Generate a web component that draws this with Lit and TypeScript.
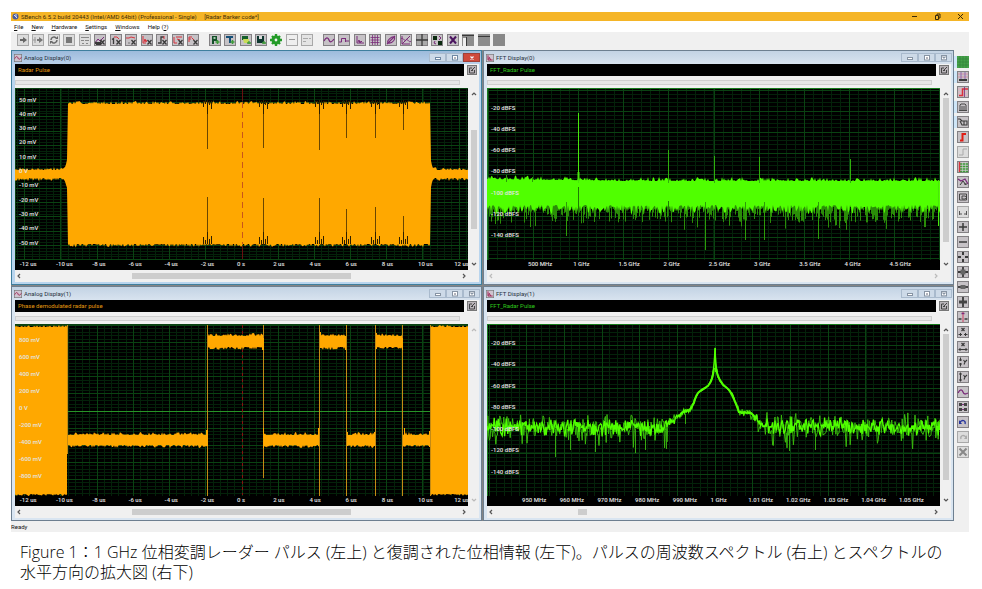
import { LitElement, html, svg, css, TemplateResult, SVGTemplateResult } from "lit";
import { customElement, property } from "lit/decorators.js";
import { classMap } from "lit/directives/class-map.js";

type Glyph = SVGTemplateResult;
interface Tool { name: string; glyph: Glyph; plain?: boolean; faded?: boolean; lit?: boolean }
interface Mark { at: number; text: string }
interface Plot {
  xLines: { zero: number; step: number; parts: number };
  yLines: { zero: number; step: number; parts: number };
  xMarks: Mark[];
  yMarks: Mark[];
  trace: Glyph;
}

const W = 453;
const H = 182;
const GRID_H = 172;

/* repeatable noise, so that the traces are the same on every load */
function noise(seed: number) {
  let s = seed;
  return () => {
    s = (s * 1664525 + 1013904223) >>> 0;
    return s / 4294967296;
  };
}

function path(points: number[][]): string {
  return "M" + points.map(([x, y]) => `${x.toFixed(1)} ${y.toFixed(1)}`).join("L");
}

/* filled band between two ragged edges */
function band(seed: number, x0: number, x1: number, top: (x: number) => number, bottom: (x: number) => number, rough: number): string {
  const rnd = noise(seed);
  const up: number[][] = [];
  const down: number[][] = [];
  for (let x = x0; x <= x1; x += 1) {
    up.push([x, top(x) - Math.pow(rnd(), 2) * rough]);
    down.unshift([x, bottom(x) + Math.pow(rnd(), 2) * rough]);
  }
  return path(up.concat(down)) + "Z";
}

function pulseTrace(): Glyph {
  const edge = (x: number) => {
    if (x < 45 || x > 421) return 4;
    if (x < 53) return 4 + Math.pow((x - 45) / 8, 3) * 12;
    if (x > 415) return 4 + Math.pow((421 - x) / 6, 3) * 14;
    return 70;
  };
  const notches: number[][] = [
    [192, 61, 109], [248, 60, 110], [304, 62, 110], [331, 50, 121], [360, 50, 119], [388, 42, 128],
  ];
  return svg`
    <path fill="#ffa800" d=${band(7, 0, W, (x) => 86 - edge(x), (x) => 86 + edge(x), 3)} />
    ${notches.map(([x, a, b]) => svg`
      <path stroke="#6a4600" stroke-width="1" d=${`M${x + 0.5} 12V${a}M${x + 0.5} ${b}V156`} />
      <path stroke="#2c1e00" stroke-width="1" fill="none"
        d=${`M${x - 3.5} 13v6M${x - 1.5} 13v3M${x + 0.5} 12v14M${x + 2.5} 13v4M${x + 4.5} 13v8M${x - 3.5} 156v-7M${x - 1.5} 156v-4M${x + 0.5} 156v-12M${x + 2.5} 156v-5M${x + 4.5} 156v-8`} />`)}
    <path stroke="#c8541c" stroke-width="1" stroke-dasharray="6 4" d="M227.5 14V156" />
    <path stroke="#6a1010" stroke-width="1" d="M227.5 0V13M227.5 158V171" />`;
}

function phaseTrace(): Glyph {
  const steps: number[][] = [
    [53, 192, 0], [192, 248, 1], [248, 304, 0], [304, 331, 1], [331, 360, 0], [360, 388, 1], [388, 415, 0],
  ];
  return svg`
    <rect x="52" y="87" width="363" height="1" fill="#279427" />
    <path stroke="#8a1010" stroke-dasharray="3 3" d="M227.5 1V171" />
    <path fill="#ffa800" d=${band(3, 0, 52, () => 3, () => 170, 2)} />
    <path fill="#ffa800" d=${band(5, 415, W, () => 3, () => 170, 2)} />
    ${steps.map(([a, b, high], i) => svg`
      <path fill="#ffa800" d=${band(21 + i, a, b, () => (high ? 12 : 111), () => (high ? 23 : 121), 3)} />`)}
    <path stroke="#c48a14" d="M52.5 1V130M192.5 1V172M248.5 1V154M304.5 1V172M331.5 1V172M360.5 1V172M387.5 1V172M415.5 1V172" />
    <path fill="#ffa800" d="M191 106h2v16h-2zM247 14h2v12h-2zM248 104h1v20h-1zM303 104h1v18h-1zM305 8h1v16h-1zM330 12h1v14h-1zM332 108h1v14h-1zM359 108h1v14h-1zM361 9h1v16h-1zM387 14h1v12h-1zM389 104h1v18h-1zM414 107h1v16h-1z" />`;
}

function spectrumTrace(): Glyph {
  const rnd = noise(99);
  const top: number[][] = [];
  const bottom: number[][] = [];
  const deep: string[] = [];
  for (let x = 0; x <= W; x += 1) {
    top.push([x, 93 - Math.max(0, 1 - x / 140) * 2 - Math.pow(rnd(), 3) * 4]);
    bottom.unshift([x, 117 + Math.pow(rnd(), 1.5) * 9]);
    deep.push(`M${x + 0.5} 116V${(119 + Math.pow(rnd(), 1.6) * 16).toFixed(1)}`);
    if (rnd() > 0.96) deep.push(`M${x + 0.5} 116V${(132 + rnd() * 10).toFixed(1)}`);
  }
  return svg`
    <path stroke="#2a8c08" d=${deep.join("")} />
    <path fill="#50ff00" d=${path(top.concat(bottom)) + "Z"} />
    <path stroke="#2c9c08" d="M79.5 114V148M218.5 114V162M258.5 114V152M277.5 114V152M331.5 114V151M19.5 87V94M45.5 89V94" />
    <path stroke="#49e60a" d="M91.5 25V95M451.5 92V138" />
    <path stroke="#49e60a" stroke-width="2" d="M91.5 84V93" />
    <path stroke="#2fae0c" d="M181.5 62V95M227.5 68V95M272.5 69V95M363.5 71V95" />
    <path stroke="#1c7a05" d="M91.5 99V128M181.5 113V128" />`;
}

function zoomTrace(): Glyph {
  const shape: number[][] = [
    [0, 103], [176, 103], [185, 97], [192, 92], [196, 88], [203, 86], [207, 78], [211, 69], [215, 66], [221, 62],
    [225, 54], [227, 42], [228, 24], [229, 42], [231, 53], [236, 61], [241, 65], [245, 69], [249, 79], [252, 88],
    [263, 89], [268, 93], [277, 102], [W, 103],
  ];
  const at = (x: number) => {
    let i = 1;
    while (i < shape.length - 1 && shape[i][0] < x) i++;
    const [ax, ay] = shape[i - 1];
    const [bx, by] = shape[i];
    return ay + ((by - ay) * (x - ax)) / (bx - ax);
  };
  const rnd = noise(41);
  const strong: number[][] = [];
  const soft: number[][] = [];
  for (let x = 0; x <= W; x += 0.8) {
    const d = Math.abs(x - 228);
    const rough = d < 20 ? 0.6 : d < 40 ? 3 : d < 52 ? 6 : 11;
    const fall = rnd() > 0.85 && d > 24 ? 16 * rnd() : 0;
    soft.push([x, at(x) + (rnd() + rnd() - 1) * rough * 1.3 + fall]);
    strong.push([x, at(x) + (rnd() + rnd() - 1) * rough * 0.9]);
  }
  return svg`
    <path stroke="#38b80c" fill="none" stroke-width="1" d=${path(soft)} />
    <path stroke="#35a80f" d="M68.5 105V133M83.5 105V126M108.5 105V128M148.5 105V129M158.5 105V126M179.5 105V125M198.5 90V100M302.5 105V127M328.5 105V126" />
    <path stroke="#50ff00" fill="none" stroke-width="1.3" d=${path(strong)} />
    <path stroke="#50ff00" fill="none" stroke-width="2" d="M192 92L196 88L203 86L207 79C209 68 214 66 218 64S226 56 227 44M229 44C231 58 237 62 240 64S246 72 252 88L264 89L270 95" />
    <path stroke="#50ff00" d="M228.5 24V48" />`;
}

const volts = (max: number, step: number, unit: string, zero: number, pitch: number): Mark[] => {
  const out: Mark[] = [];
  for (let v = max; v >= -max; v -= step) out.push({ at: zero - (v / step) * pitch, text: v ? `${v} ${unit}` : "0 V" });
  return out;
};
const times: Mark[] = [-12, -10, -8, -6, -4, -2, 0, 2, 4, 6, 8, 10, 12].map((t) => ({
  at: 227 + t * 18.1, text: t ? `${t} us` : "0 s",
}));
const levels = (zero: number, pitch: number): Mark[] =>
  [1, 2, 3, 4, 5, 6, 7].map((n) => ({ at: zero + n * pitch, text: `-${n * 20} dBFS` }));

const plots: Record<string, Plot> = {
  pulse: {
    xLines: { zero: 227, step: 36.2, parts: 5 }, yLines: { zero: 86, step: 14.3, parts: 5 },
    xMarks: times, yMarks: volts(50, 10, "mV", 86, 14.3), trace: pulseTrace(),
  },
  phase: {
    xLines: { zero: 227, step: 36.2, parts: 5 }, yLines: { zero: 87, step: 17.1, parts: 5 },
    xMarks: times, yMarks: volts(800, 200, "mV", 87, 17.1), trace: phaseTrace(),
  },
  spectrum: {
    xLines: { zero: 1, step: 45.2, parts: 5 }, yLines: { zero: 2, step: 21.1, parts: 5 },
    xMarks: ["500 MHz", "1 GHz", "1.5 GHz", "2 GHz", "2.5 GHz", "3 GHz", "3.5 GHz", "4 GHz", "4.5 GHz"]
      .map((text, i) => ({ at: 46 + i * 45.2, text })),
    yMarks: levels(2, 21.1), trace: spectrumTrace(),
  },
  zoomed: {
    xLines: { zero: 2, step: 37.7, parts: 5 }, yLines: { zero: 0, step: 21.5, parts: 5 },
    xMarks: ["950 MHz", "960 MHz", "970 MHz", "980 MHz", "990 MHz", "1 GHz", "1.01 GHz", "1.02 GHz", "1.03 GHz", "1.04 GHz", "1.05 GHz"]
      .map((text, i) => ({ at: 40 + i * 37.7, text })),
    yMarks: levels(0, 21.5), trace: zoomTrace(),
  },
};

function gridPath(p: Plot, major: boolean): string {
  let d = "";
  const add = (zero: number, step: number, parts: number, end: number, vertical: boolean) => {
    const s = major ? step : step / parts;
    for (let v = ((zero % s) + s) % s; v < end; v += s) {
      const c = Math.floor(v) + 0.5;
      d += vertical ? `M${c} 0V${GRID_H}` : `M0 ${c}H${W}`;
    }
  };
  add(p.xLines.zero, p.xLines.step, p.xLines.parts, W, true);
  add(p.yLines.zero, p.yLines.step, p.yLines.parts, GRID_H, false);
  return d;
}

/* glyphs, all on a 12 by 12 board */
const K = "#3a3a3a";
const P = "#7a2c7a";
const R = "#d8323c";
const G = "#3f9b3a";
const s = (d: string, c = K, w = 1): Glyph => svg`<path d=${d} fill="none" stroke=${c} stroke-width=${w} />`;
const f = (d: string, c = K): Glyph => svg`<path d=${d} fill=${c} />`;
const j = (...g: Glyph[]): Glyph => svg`${g}`;
const cross = s("M6.5 6l4 4.5M10.5 6l-4 4.5", K, 1.3);

const acquire: Tool[] = [
  { name: "Start", faded: true, glyph: f("M3 5h3V3l4 3-4 3V7H3z", "#666") },
  { name: "Start single", faded: true, glyph: j(f("M5 5h2V3l4 3-4 3V7H5z", "#777"), s("M1 6h3M3 3v6", "#999")) },
  { name: "Loop", faded: true, glyph: j(s("M3 6c0-3 4-4 5-2M9 6c0 3-4 4-5 2", "#666", 1.5), f("M7 5h3V2zM5 7H2v3z", "#666")) },
  { name: "Stop", faded: true, glyph: f("M3 3h6v6H3z", "#777") },
  { name: "Trigger force", faded: true, glyph: s("M2 3.5h8M2 6.5h3M6 6.5h4M3 9.5h2M7 9.5h2", "#888") },
  { name: "Remove analog", glyph: j(s("M1 9l3-4 2 2 4-4", P), f("M1 7l2 3H1zM2 8h4l1-3v6H2z"), cross) },
  { name: "Remove single", glyph: j(s("M3.5 10V4.500L2 5.500", K, 1.3), s("M4 3h3l2 2", R), cross) },
  { name: "Remove trace", glyph: j(s("M1 4h3l2-1 4 1", R), s("M3 9h2", "#777"), cross) },
  { name: "Remove FFT", glyph: j(s("M2 2v7h3M3 8l1-3 1 3 1-2", R), cross) },
  { name: "Remove histogram", glyph: j(s("M2 9h3V3h3", K, 1.3), s("M8 2v3", R), cross) },
  { name: "Remove measure", glyph: j(s("M2 3v6h3M4 3h6M5 5l3 1", R), cross) },
  { name: "Remove filter", glyph: j(s("M2 3h3M2 5h2M2 3v5M5 4l2 2", R), cross) },
];
const files: Tool[] = [
  { name: "New project", glyph: j(f("M3 2h5v5H5v3H3z", "#14502a"), f("M4.500 3h2v2h-2z", "#a8c8b0"), s("M8.500 6v4M6.500 8h4", G, 1.5)) },
  { name: "New text", glyph: j(f("M2 2h7v2H7v5H5V4H2z", "#175078"), s("M8.500 6v4M6.500 8h4", G, 1.5)) },
  { name: "Import", glyph: j(f("M2 2h6v4H2z", "#15602a"), f("M3 5h6v4H4z", "#c9dc58"), s("M9 7v3M7 9h4", G, 1.3)) },
  { name: "Save", glyph: j(f("M2 2h7v7H2z", "#0f3830"), f("M4 2h3v3H4z", "#ddd"), s("M9 7v3M7 9h4", G, 1.3)) },
  { name: "Settings", plain: true, glyph: j(s("M6 0v12M0 6h12M2 2l8 8M10 2l-8 8", "#239b28", 2.4), svg`<circle cx="6" cy="6" r="3.2" fill="none" stroke="#239b28" stroke-width="2.6" /><circle cx="6" cy="6" r="1.4" fill="#f0f0f0" />`) },
  { name: "Comment", faded: true, glyph: j(f("M1 1h10v10H1z", "#eee"), s("M3 5.5h6", "#999")) },
  { name: "Report", faded: true, glyph: j(f("M1 1h10v10H1z", "#e4e4e4"), s("M2 4.5h5M8 4.5h2M2 7.5h3", "#aaa")) },
];
const displays: Tool[] = [
  { name: "Analog display", glyph: s("M1 7c2-4 4-4 5-1s3 2 5-1", P, 1.3) },
  { name: "Digital display", glyph: s("M1 8h2.500V4.500h4V7H11M3.500 5v3M7.500 4v4", P) },
  { name: "FFT display", glyph: s("M3 2v7h7M4 8l1-2 1 3 1-2 1 1", P) },
  { name: "Spreadsheet", glyph: s("M1.5 3.5h9M1.5 6h9M1.5 8.5h9M3.5 1v10M6 1v10M8.5 1v10", P, 0.8) },
  { name: "XY display", glyph: s("M3 9c-2-2 4-7 6-6s-1 7-6 6zM2 10l8-8", P, 1.1) },
  { name: "Histogram", glyph: s("M1 5c2-3 4 4 5 1s3 4 5 1M2 10l8-8M2 2v8h8", P) },
  { name: "Tile", glyph: j(f("M1 1h10v10H1z", "#aaa"), s("M6 0v12M0 6h12", K, 1.3)) },
  { name: "Swap", glyph: j(f("M2 2h4v4H2zM7 7h4v4H7z", "#0b2a10"), s("M8 2l2 2-2 2M4 7l-1 2 2 1", P)) },
  { name: "Close all", glyph: s("M3 2.5l6 7M9 2.5l-6 7", "#4b1560", 2) },
  { name: "Side panel", glyph: j(f("M0 0h12v12H0z", "#8c8c8c"), f("M1 4h3v8H1z", "#eee"), s("M0 1.5h12M4.5 3v9", K)) },
  { name: "Top panel", glyph: j(f("M0 0h12v12H0z", "#8c8c8c"), s("M0 2.5h12", K)) },
  { name: "Full panel", glyph: f("M0 0h12v12H0z", "#888") },
];
const arrows = "M6 1v3M6 8v3M1 6h3M8 6h3";
const side: Tool[] = [
  { name: "Grid", lit: true, glyph: j(f("M0 0h12v12H0z", "#45a049"), s("M3 0v12M6 0v12M9 0v12M0 3h12M0 6h12M0 9h12", "#2f8036", 0.6)) },
  { name: "Scale", lit: true, glyph: j(s("M1 3h10M1 6h10", "#d890a8"), s("M4 1v7M8 1v7", "#8a6ab0"), f("M2 8h8v2H2z")) },
  { name: "Curve", glyph: j(s("M1 3h10M1 6h10M1 9h10", "#eab0c0"), s("M2 9.500h3.500V3H11", R, 1.5), s("M7.500 1v10", P, 0.8)) },
  { name: "Lock", lit: true, glyph: s("M3 9V4l1-1h4l1 1v5M2 9.5h8M5 5v4M7 5v4", K, 0.9) },
  { name: "Label", lit: true, glyph: s("M1 3h2l2 2M4 5h6v4H5L3 5M7 5v4", K, 1.1) },
  { name: "Rising", glyph: s("M3 9.5h2.5V3H9", "#e01c14", 2) },
  { name: "Falling", faded: true, glyph: s("M2 9h4V3h4", "#aaa") },
  { name: "Levels", glyph: j(s("M2 3h9M2 5.5h9M2 8h9M2 10.5h9", G, 1.4), s("M2.5 1v10", R, 1.4), s("M5.5 1v10M8.5 1v10", "#ddd", 0.5)) },
  { name: "Signals", glyph: j(s("M1 3l3 2 4-2 3 5", P, 1.3), s("M3 9l3-4 3 4M7 8h3", K)) },
  { name: "Copy", glyph: s("M2.5 3h7v6h-7zM5 5h3l2 1.5L8 8H5z", K, 0.9) },
  { name: "Width", faded: true, glyph: s("M2.5 5v4M9.5 5v4M3 8h2M7 8h2", "#555") },
  { name: "Zoom in", glyph: s("M6 2v8M2 6h8", K, 1.5) },
  { name: "Zoom out", glyph: s("M2 6h8", K, 1.5) },
  { name: "Move", glyph: s(arrows, K, 2) },
  { name: "Fit", glyph: j(s(arrows, K, 1.8), f("M3.5 3.5h5v5h-5z", "#666")) },
  { name: "Fit width", glyph: j(s("M1 6h10", K, 1.8), f("M3.5 4h5v4h-5z", "#666")) },
  { name: "Fit height", glyph: j(s("M6 1v10", K, 1.8), f("M2 4.5h8v3H2z", "#444")) },
  { name: "Cursor", glyph: j(s("M6 1v10", "#d05070", 1.2), s("M4.500 2.5h3", P, 1.4), s("M1.5 8h3M7.5 8h3", K, 1.6)) },
  { name: "Shrink X", glyph: j(s("M4.5 2l3 3M7.5 2l-3 3", K, 1.2), s("M1.5 8.5h3.5M7 8.5h3.5M3.5 7v3M8.5 7v3", K)) },
  { name: "Stretch X", glyph: j(s("M4.5 2l3 3M7.5 2l-3 3", K, 1.2), s("M1.5 8.5h9M3 7v3M9 7v3", K)) },
  { name: "Shrink Y", glyph: j(s("M3.5 1.5v3.5M3.5 7v3.5M2 4h3M2 8h3", K), s("M6.5 4l1.5 2 2-2M8 6l-1 2.5", K, 1.1)) },
  { name: "Stretch Y", glyph: j(s("M3.5 1.5v9M2 3h3M2 9h3", K), s("M6.5 4l1.5 2 2-2M8 6l-1 2.5", K, 1.1)) },
  { name: "Wave", glyph: s("M1 7c2-4 4-4 5-1s3 2 5 1", P, 1.3) },
  { name: "Arrange", glyph: j(f("M2 2h3v3H2zM7 2h3v3H7zM2 7h3v3H2zM7 7h3v3H7z", "#444"), s("M5 3.5h2M5 8.5h2", P)) },
  { name: "Undo", glyph: j(s("M3 6c3-3 6-1 5 2", "#26349c", 1.3), f("M2 4v4h3z", "#26349c")) },
  { name: "Redo", faded: true, glyph: j(s("M9 6c-3-3-6-1-5 2", "#aaa", 1.3), f("M10 4v4H7z", "#aaa")) },
  { name: "Delete", faded: true, glyph: s("M2.5 2.5l7 7M9.5 2.5l-7 7", "#888", 2) },
];

const toolStyles = css`
  button { padding: 0; margin: 0; border: 0; background: none; display: block; font: inherit; color: inherit; }
  svg { display: block; }
  .tool { width: 12px; height: 12px; flex: none; }
  .tool svg { width: 12px; height: 12px; }
`;

function toolButton(t: Tool): TemplateResult {
  return html`<button class="tool" aria-label=${t.name} title=${t.name}>
    <svg viewBox="0 0 12 12">
      ${t.plain ? "" : svg`<rect x="0.5" y="0.5" width="11" height="11" fill=${t.faded ? "#dcdcdc" : "#c6c2c6"} stroke=${t.faded ? "#a8a8a8" : "#838083"} />`}
      ${t.glyph}
    </svg>
  </button>`;
}

@customElement("display-window")
export class DisplayWindow extends LitElement {
  @property() heading = "";
  @property() channel = "";
  @property() plot = "pulse";
  @property() tone = "amber";
  @property({ type: Boolean }) active = false;
  @property({ attribute: false }) hbar: number[] | null = null;
  @property({ attribute: false }) vbar: number[] | null = null;

  static styles = [toolStyles, css`
    :host { display: block; min-width: 0; font-family: Roboto, "Open Sans", sans-serif; }
    .frame { border: 1px solid #6d7f90; background: #d9e5f1; padding: 0 2px 2px 3px; box-sizing: border-box; }
    .frame.active { border-color: #3f7f9e; background: #b9d5ee; }
    .title { height: 13px; display: flex; align-items: center; gap: 2px; background: linear-gradient(#c3d3e4, #d8e3ef); margin: 0 -2px 0 -3px; padding: 0 1px 0 2px; box-sizing: border-box; }
    .active .title { background: linear-gradient(#9dbbdc, #b9d0ea); }
    .title h2 { margin: 0; flex: 1; font-size: 6px; line-height: 10px; font-weight: 400; color: #26303c; }
    .mini { width: 8px; height: 8px; }
    .ctrls { display: flex; }
    .ctrls button { width: 17px; height: 9px; box-sizing: border-box; border: 1px solid #a9bacd; background: #cddae8; display: grid; place-items: center; }
    .ctrls svg { width: 8px; height: 6px; }
    .active .ctrls .close { background: #cf4a3c; border-color: #a04038; }
    .body { background: #f0f0f0; }
    .legend { display: flex; gap: 2px; padding-right: 1px; background: #f4f4f4; }
    .legend p { margin: 0; flex: 1; background: #000; font-size: 6px; line-height: 12px; height: 12px; padding-left: 3px; }
    .amber { color: #e69a10; }
    .green { color: #2fc81c; }
    .groove { height: 5px; margin: 0 19px 0 0; border: 1px solid #cfcfcf; background: #e6e6e6; box-sizing: border-box; }
    .strip { padding: 4px 0 3px; }
    .view { display: flex; }
    .plot { position: relative; flex: 1; min-width: 0; height: 182px; background: #000; overflow: hidden; }
    .plot svg { width: 100%; height: 100%; }
    .mark { position: absolute; font-size: 6px; line-height: 6px; white-space: nowrap; color: #e4e4e4; font-weight: 500; }
    .ymark { left: 4px; margin-top: -6px; }
    .xmark { bottom: 3px; margin-left: -5px; }
    .vbar { width: 11px; display: flex; flex-direction: column; align-items: center; justify-content: space-between; padding: 2px 0; box-sizing: border-box; }
    .hbar { display: flex; align-items: center; height: 12px; padding-right: 11px; justify-content: space-between; box-sizing: border-box; }
    .track { flex: 1; align-self: stretch; display: flex; }
    .hbar .track { align-items: center; }
    .vbar .track { flex-direction: column; align-items: center; }
    .thumb { background: #cdcdcd; }
    .hbar .thumb { height: 6px; }
    .vbar .thumb { width: 6px; }
    .arrow { width: 8px; height: 8px; }
    .arrow svg { width: 8px; height: 8px; }
  `];

  private arrow(name: string, d: string, dim: boolean) {
    return html`<button class="arrow" aria-label=${name}>
      <svg viewBox="0 0 8 8"><path d=${d} fill="none" stroke=${dim ? "#bbb" : "#555"} stroke-width="1.2" /></svg>
    </button>`;
  }

  render() {
    const p = plots[this.plot];
    const ink = this.active ? "#f4f8fc" : "#8794a4";
    const analog = this.tone === "amber";
    return html`<section class=${classMap({ frame: true, active: this.active })}>
      <header class="title">
        <svg class="mini" viewBox="0 0 12 12">
          <rect x="0.5" y="0.5" width="11" height="11" fill="#cfc4cf" stroke="#777" />
          <path d=${analog ? "M1 7c2-4 4-4 5-1s3 2 5-1" : "M3 2v7h7M4 8l1-3 2 4"} fill="none" stroke="#a02858" stroke-width="1.5" />
        </svg>
        <h2>${this.heading}</h2>
        <div class="ctrls">
          <button aria-label="Minimize"><svg viewBox="0 0 8 6"><rect x="1.5" y="2.5" width="5" height="2" fill="#fff" stroke=${this.active ? "#6f88a4" : ink} /></svg></button>
          <button aria-label="Maximize"><svg viewBox="0 0 8 6"><rect x="1.5" y="0.5" width="5" height="4.5" fill="#fff" stroke=${this.active ? "#6f88a4" : ink} /><path d="M3 3h2" stroke="#667" /></svg></button>
          <button class="close" aria-label="Close"><svg viewBox="0 0 8 6">
            ${this.active ? "" : svg`<rect x="1.5" y="0.5" width="5" height="4.5" fill="#fff" stroke=${ink} />`}
            <path d="M2.5 1.5l3 3M5.5 1.5l-3 3" stroke=${ink} stroke-width="1.2" /></svg></button>
        </div>
      </header>
      <div class="body">
        <div class="legend">
          <p class=${this.tone}>${this.channel}</p>
          <button class="tool" aria-label="Detach">
            <svg viewBox="0 0 12 12"><rect x="1.5" y="1.5" width="9" height="9" fill="#b9b4b9" stroke="#777" /><path d="M3.5 4v5h5V6M3.5 4H6M5 7l4-4M5 6.5h2" fill="none" stroke="#444" /></svg>
          </button>
        </div>
        <div class="strip"><div class="groove"></div></div>
        <div class="view">
          <div class="plot">
            <svg viewBox="0 0 ${W} ${H}" preserveAspectRatio="none">
              <path d=${gridPath(p, false)} stroke="#04220a" fill="none" />
              <path d=${gridPath(p, true)} stroke="#0a4312" fill="none" />
              <path d="M0 0.5H${W}M0.5 0V${GRID_H}" stroke=${analog ? "#0a4312" : "#167a1c"} />
              ${p.trace}
            </svg>
            ${p.yMarks.map((m) => html`<span class="mark ymark" style="top:${(m.at / H) * 100}%">${m.text}</span>`)}
            ${p.xMarks.map((m) => html`<span class="mark xmark" style="left:${(m.at / W) * 100}%">${m.text}</span>`)}
          </div>
          <div class="vbar">
            ${this.arrow("Up", "M2 5l2-2 2 2", !this.vbar)}
            <div class="track">${this.bar(this.vbar)}</div>
            ${this.arrow("Down", "M2 3l2 2 2-2", !this.vbar)}
          </div>
        </div>
        <div class="hbar">
          ${this.arrow("Left", "M5 2L3 4l2 2", !this.hbar)}
          <div class="track">${this.bar(this.hbar)}</div>
          ${this.arrow("Right", "M3 2l2 2-2 2", !this.hbar)}
        </div>
      </div>
    </section>`;
  }

  private bar(range: number[] | null) {
    if (!range) return "";
    const [a, b] = range;
    return html`<span style="flex:${a} 0 0"></span>
      <span class="thumb" style="flex:${b - a} 0 0"></span>
      <span style="flex:${100 - b} 0 0"></span>`;
  }
}

@customElement("app-root")
export class AppRoot extends LitElement {
  static styles = [toolStyles, css`
    :host { display: block; background: #fff; min-height: 100vh; padding: 12px 13px 0 11px; box-sizing: border-box; font-family: Roboto, "Open Sans", sans-serif; color: #111; }
    .app { background: #f0f0f0; }
    .caption-bar { display: flex; align-items: center; gap: 2px; height: 9px; background: #f5b527; padding: 0 4px 0 1px; }
    .caption-bar h1 { margin: 0; flex: 1; font-size: 6px; line-height: 9px; font-weight: 400; color: #3d2c08; white-space: pre; }
    .logo { width: 7px; height: 7px; }
    .sys { display: flex; gap: 14px; }
    .sys svg { width: 9px; height: 8px; }
    .menu { display: flex; gap: 8px; height: 11px; background: #fff; padding: 0 3px; font-size: 6px; line-height: 11px; }
    .menu u { text-underline-offset: 1px; }
    .tools { display: flex; gap: 10px; height: 18px; padding: 2px 6px 0; box-sizing: border-box; align-items: flex-start; }
    .group { display: flex; justify-content: space-between; }
    .long { width: 182px; }
    .short { width: 104px; }
    .work { display: flex; }
    .mdi { flex: 1; min-width: 0; display: grid; grid-template-columns: 1fr 1fr; gap: 1px; background: #848484; }
    .side { width: 15px; padding: 6px 0 0 3px; box-sizing: border-box; display: flex; flex-direction: column; gap: 3px; background: #f0f0f0; }
    .side .lit { background: #cfe6f8; }
    .side .cell { margin: 0 0 0 -3px; padding-left: 3px; }
    .status { height: 11px; font-size: 6px; line-height: 11px; background: #f0f0f0; }
    .figure { margin: 0; padding: 10px 12px 0 9px; font-family: "Open Sans", "Noto Sans CJK JP", sans-serif; font-weight: 300; font-size: 16px; line-height: 20px; color: #000; }
  `];

  render() {
    const menu = ["File", "New", "Hardware", "Settings", "Windows"];
    return html`
      <main class="app">
        <header class="caption-bar">
          <svg class="logo" viewBox="0 0 7 7"><circle cx="3.5" cy="3.5" r="3" fill="#4a5a9c" /><path d="M2 2l3 3M4 1v3" stroke="#d8e0f0" /></svg>
          <h1>SBench 6.5.2 build 20443 (Intel/AMD 64bit) (Professional - Single)     [Radar Barker code*]</h1>
          <div class="sys">
            <button aria-label="Minimize"><svg viewBox="0 0 9 8"><path d="M2 3.5h5" stroke="#3a2a08" /></svg></button>
            <button aria-label="Restore"><svg viewBox="0 0 9 8"><path d="M2.5 2.5h3v4h-3zM4 2V1h3v4H6" fill="none" stroke="#3a2a08" /></svg></button>
            <button aria-label="Close"><svg viewBox="0 0 9 8"><path d="M2 1l5 5M7 1L2 6" stroke="#3a2a08" /></svg></button>
          </div>
        </header>
        <nav class="menu">
          ${menu.map((m) => html`<button><u>${m[0]}</u>${m.slice(1)}</button>`)}
          <button>Help (<u>?</u>)</button>
        </nav>
        <div class="tools">
          <div class="group long">${acquire.map(toolButton)}</div>
          <div class="group short">${files.map(toolButton)}</div>
          <div class="group long">${displays.map(toolButton)}</div>
        </div>
        <div class="work">
          <div class="mdi">
            <display-window active heading="Analog Display(0)" channel="Radar Pulse" plot="pulse" .hbar=${[25, 75]} .vbar=${[20, 81]}></display-window>
            <display-window heading="FFT Display(0)" channel="FFT_Radar Pulse" plot="spectrum" tone="green" .vbar=${[0, 89]}></display-window>
            <display-window heading="Analog Display(1)" channel="Phase demodulated radar pulse" plot="phase" .hbar=${[25, 75]}></display-window>
            <display-window heading="FFT Display(1)" channel="FFT_Radar Pulse" plot="zoomed" tone="green" .hbar=${[19, 21]} .vbar=${[0, 90]}></display-window>
          </div>
          <aside class="side">
            ${side.map((t) => html`<div class=${classMap({ cell: true, lit: !!t.lit })}>${toolButton(t)}</div>`)}
          </aside>
        </div>
        <footer class="status">Ready</footer>
      </main>
      <p class="figure">Figure 1：1 GHz 位相変調レーダー パルス (左上) と復調された位相情報 (左下)。パルスの周波数スペクトル (右上) とスペクトルの水平方向の拡大図 (右下)</p>
    `;
  }
}
